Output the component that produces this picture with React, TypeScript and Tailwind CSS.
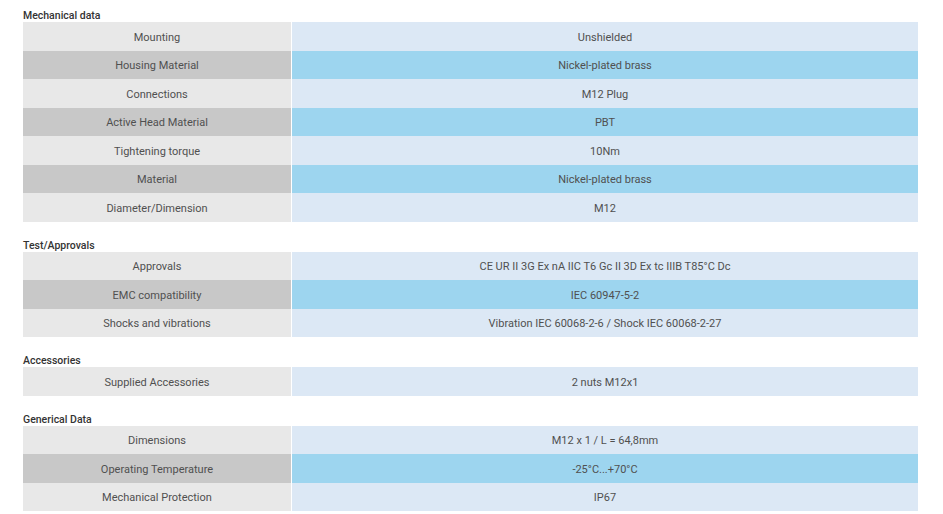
import React from 'react';

type Row = { label: string; value: string };
type Section = { title: string; rows: Row[] };

const sections: Section[] = [
  {
    title: 'Mechanical data',
    rows: [
      { label: 'Mounting', value: 'Unshielded' },
      { label: 'Housing Material', value: 'Nickel-plated brass' },
      { label: 'Connections', value: 'M12 Plug' },
      { label: 'Active Head Material', value: 'PBT' },
      { label: 'Tightening torque', value: '10Nm' },
      { label: 'Material', value: 'Nickel-plated brass' },
      { label: 'Diameter/Dimension', value: 'M12' },
    ],
  },
  {
    title: 'Test/Approvals',
    rows: [
      { label: 'Approvals', value: 'CE UR II 3G Ex nA IIC T6 Gc II 3D Ex tc IIIB T85°C Dc' },
      { label: 'EMC compatibility', value: 'IEC 60947-5-2' },
      { label: 'Shocks and vibrations', value: 'Vibration IEC 60068-2-6 / Shock IEC 60068-2-27' },
    ],
  },
  {
    title: 'Accessories',
    rows: [{ label: 'Supplied Accessories', value: '2 nuts M12x1' }],
  },
  {
    title: 'Generical Data',
    rows: [
      { label: 'Dimensions', value: 'M12 x 1 / L = 64,8mm' },
      { label: 'Operating Temperature', value: '-25°C...+70°C' },
      { label: 'Mechanical Protection', value: 'IP67' },
    ],
  },
];

function SpecTable({ section }: { section: Section }) {
  return (
    <section className="mt-4 first:mt-0">
      <h3 className="h-[14px] pt-px text-[10.5px] font-medium leading-[14px] text-[#333]">
        {section.title}
      </h3>
      <div className="grid grid-cols-[268px_1fr] gap-x-px">
        {section.rows.map((row, i) => {
          const odd = i % 2 === 1;
          return (
            <React.Fragment key={row.label}>
              <div
                className={`flex h-[28.5px] items-center justify-center pt-[3px] ${
                  odd ? 'bg-[#c8c8c8]' : 'bg-[#e8e8e8]'
                }`}
              >
                {row.label}
              </div>
              <div
                className={`flex h-[28.5px] items-center justify-center pt-[3px] ${
                  odd ? 'bg-[#9dd5ef]' : 'bg-[#dce8f5]'
                }`}
              >
                {row.value}
              </div>
            </React.Fragment>
          );
        })}
      </div>
    </section>
  );
}

export default function App() {
  return (
    <div className="min-h-[514px] w-[943px] bg-white pl-[23px] pr-[25px] pt-2 font-['Roboto',sans-serif] text-[11px] text-[#505050]">
      {sections.map((s) => (
        <SpecTable key={s.title} section={s} />
      ))}
    </div>
  );
}
